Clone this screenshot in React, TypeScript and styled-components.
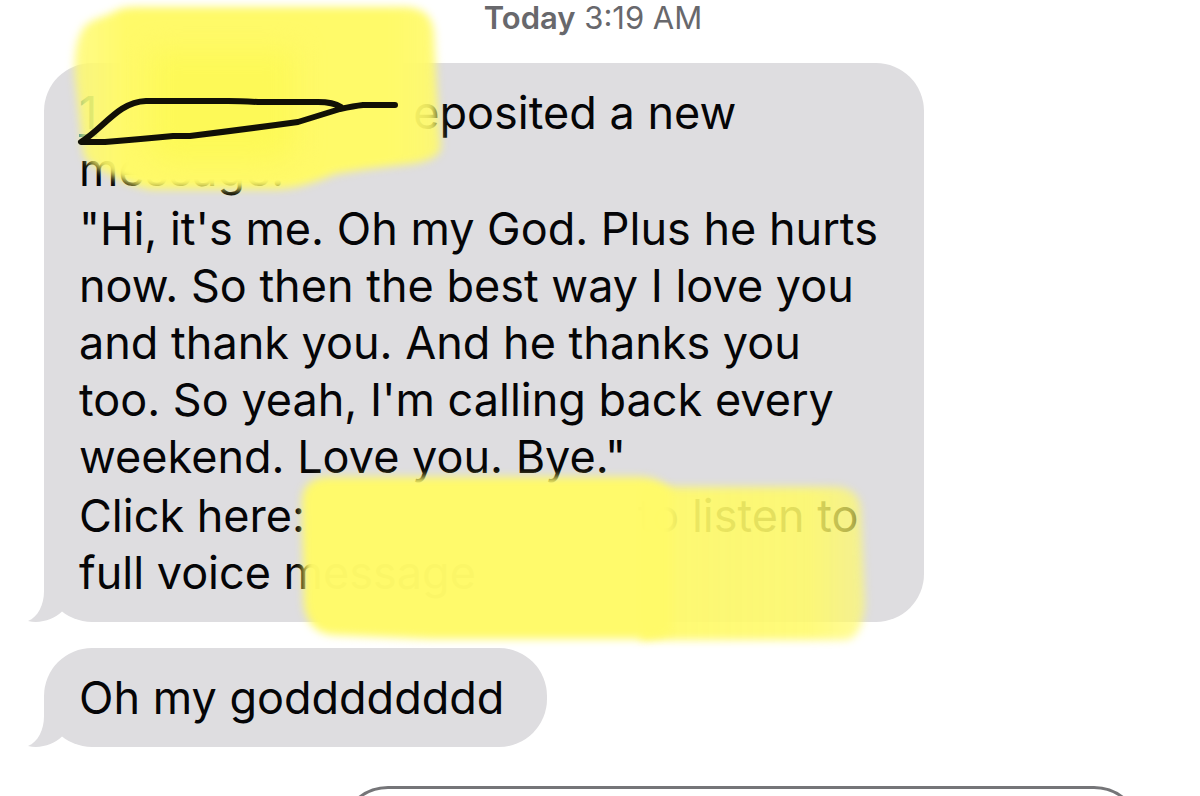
import React from "react";
import styled, { createGlobalStyle } from "styled-components";

const GlobalStyle = createGlobalStyle`
  body {
    margin: 0;
    background: #ffffff;
    color: #050507;
    font-family: Inter, "Liberation Sans", sans-serif;
  }
`;

const Conversation = styled.main`
  box-sizing: border-box;
  display: flex;
  flex-direction: column;
  height: 100vh;
  overflow: hidden;
  padding: 0 58px 0 44px;
`;

const Timestamp = styled.time`
  flex: none;
  align-self: center;
  height: 63px;
  font-size: 31px;
  line-height: 36px;
  white-space: nowrap;
  color: #68686c;

  strong {
    font-weight: 600;
  }
`;

const Thread = styled.div`
  display: flex;
  flex: none;
  flex-direction: column;
  align-items: flex-start;
  gap: 26px;
`;

const Bubble = styled.article<{ $wide?: boolean }>`
  position: relative;
  box-sizing: border-box;
  display: flex;
  flex-direction: column;
  gap: 2px;
  width: ${({ $wide }) => ($wide ? "80%" : "auto")};
  min-width: ${({ $wide }) => ($wide ? "880px" : "0")};
  padding: 21px 43px 21px 35px;
  border-radius: 48px;
  background: #dedde0;
  font-size: 45px;
  line-height: 57px;
`;

const Paragraph = styled.p`
  margin: 0;
`;

const Line = styled.span`
  display: flex;
  white-space: pre;
`;

const Hidden = styled.span<{ $width: number }>`
  flex: none;
  width: ${({ $width }) => $width}px;
`;

const MessageLink = styled.a`
  color: #2f7d95;
  text-decoration: underline;
  text-decoration-thickness: 3px;
  text-underline-offset: 5px;
`;

const TailSvg = styled.svg`
  position: absolute;
  left: -16px;
  bottom: 0;
  width: 48px;
  height: 48px;
`;

const MarkupSvg = styled.svg`
  position: absolute;
  left: -44px;
  top: -63px;
  width: 960px;
  height: 700px;
  pointer-events: none;
`;

const OutgoingBubble = styled.div`
  box-sizing: border-box;
  flex: none;
  align-self: flex-end;
  width: 73%;
  height: 99px;
  margin-top: 39px;
  border: 3px solid #757578;
  border-radius: 48px;
`;

const Tail = () => (
  <TailSvg viewBox="0 0 48 48" aria-hidden="true">
    <path
      d="M16 0V17C16 31 10 43 0 47C13 50 26 45 34 37.500L46 24V0Z"
      fill="#dedde0"
    />
  </TailSvg>
);

const Markup = () => (
  <MarkupSvg viewBox="0 0 960 700" aria-hidden="true">
    <defs>
      <filter id="marker" x="-10%" y="-10%" width="120%" height="120%" colorInterpolationFilters="sRGB">
        <feGaussianBlur stdDeviation="4" />
      </filter>
      <filter id="marker-wide" x="-30%" y="-30%" width="160%" height="160%" colorInterpolationFilters="sRGB">
        <feGaussianBlur stdDeviation="14" />
      </filter>
      <linearGradient id="top-ink" gradientUnits="userSpaceOnUse" x1="74" x2="442" y1="0" y2="0">
        <stop offset="0" stopColor="#fffa69" stopOpacity="0.78" />
        <stop offset="0.14" stopColor="#fffa69" />
        <stop offset="0.86" stopColor="#fffa69" />
        <stop offset="0.95" stopColor="#fffa69" stopOpacity="0.93" />
        <stop offset="1" stopColor="#fffa69" stopOpacity="0.82" />
      </linearGradient>
      <linearGradient id="fade" gradientUnits="userSpaceOnUse" x1="640" x2="866" y1="0" y2="0">
        <stop offset="0" stopColor="#fffa69" stopOpacity="0.94" />
        <stop offset="0.75" stopColor="#fffa69" stopOpacity="0.88" />
        <stop offset="1" stopColor="#fffa69" stopOpacity="0.65" />
      </linearGradient>
    </defs>
    <path
      d="M112 13Q120 7 135 7H405Q432 8 434 32L437 90L441 148Q439 160 410 164Q370 168 335 174Q300 189 275 189H150Q125 184 105 172Q82 162 83 150L75 78Q72 28 94 20Z"
      fill="url(#top-ink)"
      filter="url(#marker)"
    />
    <path
      d="M150 50H295V150Q280 162 265 162H165Q150 155 150 135Z"
      fill="#fdf957"
      filter="url(#marker-wide)"
    />
    <path
      d="M660 487H835Q861 488 861 512L865 605Q862 639 845 640H640V487Z"
      fill="url(#fade)"
      filter="url(#marker)"
    />
    <path
      d="M325 477H640Q662 478 672 492V632Q660 638 640 639H430L335 635Q308 634 304 605L302 500Q303 480 325 477Z"
      fill="#fffa69"
      fillOpacity="0.985"
      filter="url(#marker)"
    />
    <path
      d="M341 107Q333 102 318 102H258Q240 101 228 101H146C118 102 104 128 81 142H105Q142 139 173 136H190Q247 129 298 122L340 109Q354 106 363 105H395"
      fill="none"
      stroke="#111006"
      strokeWidth="6"
      strokeLinecap="round"
      strokeLinejoin="round"
    />
  </MarkupSvg>
);

export default function App() {
  return (
    <>
      <GlobalStyle />
      <Conversation>
        <Timestamp>
          <strong>Today</strong> 3:19 AM
        </Timestamp>
        <Thread>
          <Bubble $wide>
            <Paragraph>
              <Line>
                <MessageLink href="#caller">1</MessageLink>
                <Hidden $width={316} />
                eposited a new
              </Line>
              <Line>message.</Line>
            </Paragraph>
            <Paragraph>
              <Line>"Hi, it's me. Oh my God. Plus he hurts</Line>
              <Line>now. So then the best way I love you</Line>
              <Line>and thank you. And he thanks you</Line>
              <Line>too. So yeah, I'm calling back every</Line>
              <Line>weekend. Love you. Bye."</Line>
            </Paragraph>
            <Paragraph>
              <Line>
                Click here:
                <Hidden $width={333} />
                to listen to
              </Line>
              <Line>full voice message</Line>
            </Paragraph>
            <Tail />
            <Markup />
          </Bubble>
          <Bubble>
            <Line>Oh my godddddddd</Line>
            <Tail />
          </Bubble>
        </Thread>
        <OutgoingBubble />
      </Conversation>
    </>
  );
}
